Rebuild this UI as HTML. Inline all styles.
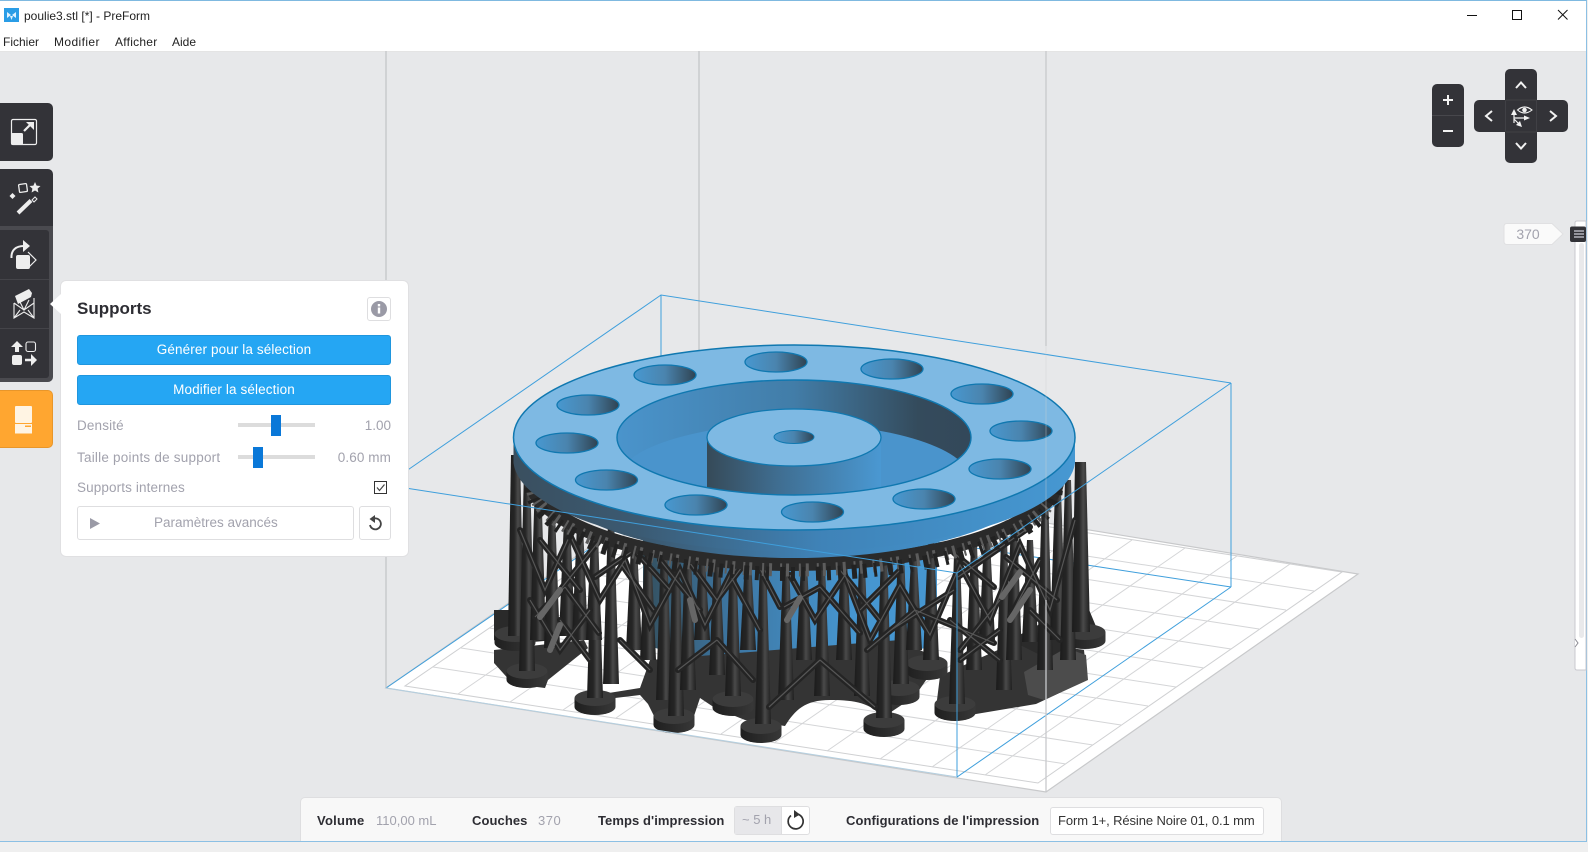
<!DOCTYPE html>
<html lang="fr"><head><meta charset="utf-8"><title>poulie3.stl [*] - PreForm</title>
<style>
html,body{margin:0;padding:0}
body{width:1588px;height:852px;overflow:hidden;position:relative;background:#efefef;font-family:"Liberation Sans",sans-serif}
.a{position:absolute;white-space:nowrap}
.dk{background:#333338}
.lb{color:#a2a2ad;font-size:13.5px;line-height:18px}
.btn{position:absolute;left:77px;width:314px;height:30px;box-sizing:border-box;background:#25a6f3;border:1px solid #1f96de;border-radius:3px;color:#fff;font-size:13.5px;line-height:27px;text-align:center;letter-spacing:.12px}
.tr{position:absolute;left:238px;width:77px;height:4px;background:#dcdcdc}
.th{position:absolute;width:10px;height:21px;background:#0a78d8}
.b{font-weight:bold;color:#2d2d33;font-size:13px;line-height:18px;top:812px;letter-spacing:.08px}
.g{color:#a2a2ad;font-size:13px;line-height:18px;top:812px}
svg{position:absolute;left:0;top:0}
.p{fill:url(#pil)}
</style></head><body>
<div class="a" style="left:0;top:0;width:1587px;height:842px;box-sizing:border-box;background:#e7e8ea;border-top:1px solid #7fb9e0;border-right:1px solid #8cc0e4;border-bottom:1px solid #8cc0e4"></div>
<div class="a" style="left:0;top:1px;width:1586px;height:50px;background:#fff;border-bottom:1px solid #e4e4e4"></div>

<svg width="1588" height="852" viewBox="0 0 1588 852">
<defs>
<linearGradient id="pil"><stop offset="0" stop-color="#1c1c1c"/><stop offset=".4" stop-color="#262626"/><stop offset=".62" stop-color="#4a4a4a"/><stop offset="1" stop-color="#1f1f1f"/></linearGradient>
<linearGradient id="ft"><stop offset="0" stop-color="#1f1f1f"/><stop offset=".5" stop-color="#2b2b2b"/><stop offset="1" stop-color="#383838"/></linearGradient>
<linearGradient id="rim"><stop offset="0" stop-color="#3a4f5f"/><stop offset=".22" stop-color="#3b5a72"/><stop offset=".55" stop-color="#3f83b8"/><stop offset="1" stop-color="#4698d2"/></linearGradient>
<linearGradient id="wall"><stop offset="0" stop-color="#4a94cc"/><stop offset=".5" stop-color="#427da8"/><stop offset=".85" stop-color="#344b5c"/><stop offset="1" stop-color="#33485a"/></linearGradient>
<linearGradient id="hub"><stop offset="0" stop-color="#364a58"/><stop offset=".4" stop-color="#3f6d90"/><stop offset="1" stop-color="#4a98d2"/></linearGradient>
<linearGradient id="hole"><stop offset="0" stop-color="#4898d0"/><stop offset=".5" stop-color="#4a84ae"/><stop offset="1" stop-color="#2f4352"/></linearGradient>
<linearGradient id="cyl"><stop offset="0" stop-color="#34505f"/><stop offset=".3" stop-color="#3d76a2"/><stop offset=".7" stop-color="#4696d0"/><stop offset="1" stop-color="#4696d0"/></linearGradient>
<clipPath id="rc"><ellipse cx="794" cy="437.5" rx="177" ry="57.5"/></clipPath>
<g id="foot"><path d="M-20.500 0V9A20.500 8 0 0 0 20.500 9V0Z" fill="url(#ft)"/><ellipse rx="20.500" ry="8" fill="#3c3c3c"/></g>
<path id="br" d="M634 550L595 577M634 550L670 590M622 565L654 610M565 587L535 617M565 587L599 633M717 640L678 670M717 640L753 680M820 660L769 707M820 660L875 707M915 610L867 650M915 610L994 643M954 590L891 630M1030 527L958 577M954 553L994 587M757 563L780 607M820 587L784 607M820 587L860 633M745 563L717 600M690 563L717 600M1006 557L1057 600M1040 560L1010 617M540 540L580 590M600 540L560 590M660 560L700 610M840 570L880 620M900 570L860 610M560 620L590 660M950 620L1000 660M1000 600L960 650M520 530L545 590L570 535L600 600L625 560L650 625L680 570L705 625L730 575L760 630M790 575L815 620L845 575L870 640L900 585L930 635L960 565L990 620L1020 545L1050 610L1075 520M530 600L560 650L590 610M1030 610L1060 640M620 640L650 670M960 660L1000 630"/>
</defs>

<!-- back grid walls -->
<path d="M386 51V688M699 51V470" stroke="#c4c5c8" stroke-width="1.3" fill="none"/>
<!-- platform -->
<path d="M386 688L1046 792L1358 574L705 467Z" fill="#fff" stroke="#c8c9cb" stroke-width="1.2"/>
<path d="M405 686L1038 783L1342 572L712 475Z" fill="none" stroke="#cfd0d2"/>
<path stroke="#d4d5d7" fill="none" d="M458 694L765 483M510 702L817 491M563 710L870 499M616 718L922 507M669 726L975 515M721 734L1027 523M774 743L1080 532M827 751L1132 540M880 759L1185 548M932 767L1237 556M985 775L1290 564M433 667L1066 764M461 648L1093 745M489 628L1121 725M517 609L1148 706M545 590L1176 687M572 571L1204 668M600 552L1231 649M628 532L1259 629M656 513L1286 610M684 494L1314 591"/>
<!-- bounding box back -->
<path d="M386 485L661 295L1231 383M661 295V370M386 688L661 500L1231 587M1231 383V587" stroke="#3f9fdc" stroke-width="1" fill="none"/>
<!-- centre blue cylinder -->
<path d="M643 530V640A147 20 0 0 0 937 640V530Z" fill="url(#cyl)"/>
<!-- rafts -->
<g fill="#343434">
<path d="M494 650L584 640L588 648L548 680L545 688L513 684L494 663Z"/>
<path d="M494 610H555V640L500 645L494 640Z" fill="#2a2a2a"/>
<path d="M590 696L640 688L650 660L900 640L940 660L915 696L882 718C872 703 855 700 830 700C805 700 795 710 785 726L745 720L715 708L700 698L694 716L654 716L648 704L640 695L615 698L600 708Z"/>
<path d="M940 676L1020 640L1084 650L1087 680L1036 704L976 714L950 718L936 708Z"/>
<path d="M1010 640L1085 600L1100 636L1050 660Z" fill="#2b2b2b"/>
<path d="M1024 672L1066 648L1086 655L1088 680L1044 700L1028 695Z" fill="#4c4c4c"/>
</g>
<use href="#foot" x="515" y="634"/><use href="#foot" x="527" y="671"/><use href="#foot" x="595" y="698"/><use href="#foot" x="674" y="716"/><use href="#foot" x="733" y="699"/><use href="#foot" x="761" y="726"/><use href="#foot" x="884" y="720"/><use href="#foot" x="899" y="688"/><use href="#foot" x="927" y="663"/><use href="#foot" x="955" y="704"/><use href="#foot" x="1085" y="632"/>
<!-- pillars -->
<g>
<path class="p" d="M508 636L511 455h9L524 636z"/>
<path class="p" d="M519 671L524 470h6L535 671z"/>
<path class="p" d="M530 640L535 480h6L546 640z"/>
<path class="p" d="M544 648L549 510h6L560 648z"/>
<path class="p" d="M559 636L564 520h6L575 636z"/>
<path class="p" d="M572 640L577 525h6L588 640z"/>
<path class="p" d="M587 698L592 530h6L603 698z"/>
<path class="p" d="M603 684L608 520h6L619 684z"/>
<path class="p" d="M586 640L591 540h6L602 640z"/>
<path class="p" d="M626 650L631 545h6L642 650z"/>
<path class="p" d="M640 660L645 545h6L656 660z"/>
<path class="p" d="M656 700L661 545h6L672 700z"/>
<path class="p" d="M668 716L673 540h6L684 716z"/>
<path class="p" d="M680 690L685 555h6L696 690z"/>
<path class="p" d="M694 640L699 560h6L710 640z"/>
<path class="p" d="M709 675L714 560h6L725 675z"/>
<path class="p" d="M725 696L730 555h6L741 696z"/>
<path class="p" d="M740 650L745 560h6L756 650z"/>
<path class="p" d="M755 724L760 555h6L771 724z"/>
<path class="p" d="M778 700L783 560h6L794 700z"/>
<path class="p" d="M796 660L801 565h6L812 660z"/>
<path class="p" d="M814 696L819 565h6L830 696z"/>
<path class="p" d="M836 660L841 560h6L852 660z"/>
<path class="p" d="M854 696L859 565h6L870 696z"/>
<path class="p" d="M876 718L881 550h6L892 718z"/>
<path class="p" d="M893 684L898 550h6L909 684z"/>
<path class="p" d="M906 650L911 560h6L922 650z"/>
<path class="p" d="M923 660L928 540h6L939 660z"/>
<path class="p" d="M949 704L954 555h6L965 704z"/>
<path class="p" d="M966 670L971 545h6L982 670z"/>
<path class="p" d="M979 640L984 540h6L995 640z"/>
<path class="p" d="M996 690L1001 540h6L1012 690z"/>
<path class="p" d="M1006 660L1011 520h6L1022 660z"/>
<path class="p" d="M1022 642L1027 540h6L1038 642z"/>
<path class="p" d="M1037 670L1042 490h6L1053 670z"/>
<path class="p" d="M1050 640L1055 490h6L1066 640z"/>
<path class="p" d="M1060 660L1065 480h6L1076 660z"/>
<path class="p" d="M1072 632L1075 462h11L1090 632z"/>
</g>
<!-- braces -->
<use href="#br" fill="none" stroke="#242424" stroke-width="6" stroke-linecap="round"/>
<use href="#br" fill="none" stroke="#565656" stroke-width="1.200"/>
<path d="M787 620L800 598M1002 597L1020 572M695 620L690 600M540 617L560 590M1010 620L1030 590M550 650L560 625" stroke="#666" stroke-width="6" stroke-linecap="round" fill="none"/>
<!-- support tips under disk -->
<path d="M530 476A264 88 0 0 0 1058 476" fill="none" stroke="#2a2a2a" stroke-width="14"/>
<path d="M532 484A262 86 0 0 0 1056 484" fill="none" stroke="#5c5c5c" stroke-width="13" stroke-dasharray="2 5 3 8 2 4 3 10"/>
<path d="M532 488A262 86 0 0 0 1056 488" fill="none" stroke="#222" stroke-width="14" stroke-dasharray="4 7 3 11 5 6"/>
<!-- underside -->
<ellipse cx="794" cy="470" rx="252" ry="88" fill="url(#rim)"/>
<!-- disk -->
<path d="M513.500 437.500A281 92.500 0 0 0 1075 437.500V463A281 92.500 0 0 1 513.500 463Z" fill="url(#rim)"/>
<ellipse cx="794.250" cy="437.500" rx="280.750" ry="92.500" fill="#7eb9e3" stroke="#1078b0" stroke-width="1.500"/>
<!-- holes -->
<g fill="url(#hole)" stroke="#1078b0" stroke-width="1.300">
<ellipse cx="776" cy="362" rx="31" ry="10"/><ellipse cx="892" cy="369" rx="31" ry="10"/><ellipse cx="982" cy="394" rx="31" ry="10"/><ellipse cx="1021" cy="431" rx="31" ry="10"/><ellipse cx="1000" cy="469" rx="31" ry="10"/><ellipse cx="924" cy="499" rx="31" ry="10"/><ellipse cx="812.500" cy="512" rx="31" ry="10"/><ellipse cx="696" cy="505" rx="31" ry="10"/><ellipse cx="606.500" cy="480" rx="31" ry="10"/><ellipse cx="567" cy="443" rx="31" ry="10"/><ellipse cx="588" cy="405" rx="31" ry="10"/><ellipse cx="665" cy="375" rx="31" ry="10"/>
</g>
<!-- recess -->
<ellipse cx="794" cy="437.500" rx="177" ry="57.500" fill="url(#wall)"/>
<g clip-path="url(#rc)">
<ellipse cx="794" cy="481" rx="177" ry="57.500" fill="#4a94cc"/>
<path d="M707 437.500V500H881V437.500Z" fill="url(#hub)"/>
</g>
<ellipse cx="794" cy="437.500" rx="177" ry="57.500" fill="none" stroke="#1078b0" stroke-width="1.400"/>
<ellipse cx="794" cy="437.500" rx="87" ry="28.500" fill="#7eb9e3" stroke="#1078b0" stroke-width="1.300"/>
<ellipse cx="794" cy="437" rx="20" ry="6.500" fill="url(#hole)" stroke="#1078b0"/>
<!-- front bounding box -->
<path d="M386 485L957 573L1231 383M957 573V777L1231 587" stroke="#3f9fdc" stroke-width="1" fill="none"/>
<path d="M386 688L957 777" stroke="#b4cfe0" stroke-width="1" fill="none"/>
<path d="M1046 51V346M1046 600V792" stroke="#c8c9cc" stroke-width="1.300"/>
<path d="M1046 346V600" stroke="#cfd0d2" stroke-width="1.300" opacity=".3"/>
</svg>

<!-- title bar -->
<svg width="20" height="16" style="left:4px;top:8px" viewBox="0 0 20 16"><rect width="15" height="14" fill="#2a9de6"/><path d="M3 4L7 7L3 10ZM12 4L8 7L12 10ZM6 8L9 8L7.500 12Z" fill="#dff2ff"/></svg>
<div class="a" style="left:24px;top:8px;font-size:12px;line-height:16px;color:#222">poulie3.stl [*] - PreForm</div>
<div class="a" style="left:3px;top:34px;font-size:12px;line-height:16px;color:#222">Fichier</div>
<div class="a" style="left:54px;top:34px;font-size:12px;line-height:16px;color:#222;letter-spacing:.4px">Modifier</div>
<div class="a" style="left:115px;top:34px;font-size:12px;line-height:16px;color:#222;letter-spacing:.25px">Afficher</div>
<div class="a" style="left:172px;top:34px;font-size:12px;line-height:16px;color:#222">Aide</div>
<svg width="130" height="30" style="left:1458px;top:1px" viewBox="1458 1 130 30"><path d="M1467 15.500H1477" stroke="#111" stroke-width="1"/><rect x="1512.500" y="10.500" width="9" height="9" fill="none" stroke="#111" stroke-width="1"/><path d="M1558 10L1567.500 19.500M1567.500 10L1558 19.500" stroke="#111" stroke-width="1"/></svg>

<!-- left toolbar -->
<div class="a dk" style="left:0;top:103px;width:53px;height:58px;border-radius:0 5px 5px 0"></div>
<div class="a dk" style="left:0;top:169px;width:53px;height:62px;border-radius:0 5px 0 0"></div>
<div class="a" style="left:0;top:226px;width:53px;height:156px;background:#4a4a4f;border-radius:0 0 5px 0"></div>
<div class="a dk" style="left:0;top:230px;width:49px;height:148px;border-radius:0 3px 3px 0"></div>
<div class="a" style="left:0;top:279px;width:49px;height:1px;background:#444449"></div>
<div class="a" style="left:0;top:328px;width:49px;height:1px;background:#444449"></div>
<div class="a" style="left:0;top:390px;width:53px;height:58px;box-sizing:border-box;background:#ffa630;border:1px solid #e8962a;border-left:0;border-radius:0 5px 5px 0"></div>
<svg width="53" height="450" viewBox="0 0 53 450" fill="none">
<!-- resize -->
<rect x="11.500" y="119.500" width="25" height="25" rx="1.500" stroke="#eee" stroke-width="1.200"/><rect x="11" y="133" width="12" height="12" rx="1.500" fill="#eee"/><path d="M24 131L32 123" stroke="#eee" stroke-width="2.200"/><path d="M26 122H34V130Z" fill="#eee"/>
<!-- wand -->
<rect x="19" y="184" width="8" height="8" rx="1" transform="rotate(-8 23 188)" stroke="#eee" stroke-width="1.300"/><path d="M35 182L36.600 185.600L40.500 186L37.600 188.600L38.400 192.500L35 190.500L31.600 192.500L32.400 188.600L29.500 186L33.400 185.600Z" fill="#eee"/><path d="M12.500 193L15.500 196L12.500 199L9.500 196Z" fill="#eee"/><path d="M18 213L31 200.500" stroke="#eee" stroke-width="4"/><path d="M32 200L35 197L37 199L34 202Z" stroke="#eee"/>
<!-- rotate -->
<path d="M11.500 258C11 250 16 246 24 246" stroke="#eee" stroke-width="2"/><path d="M23 240L30 246L23 252Z" fill="#eee"/><path d="M28 252L36 260L28 268" stroke="#eee" stroke-width="1.200"/><rect x="16" y="255" width="14" height="14" rx="2" fill="#eee"/>
<!-- supports -->
<path d="M15 296L29 289L32 293L31 297L18 304Z" fill="#eee"/><path d="M14 303V318L24 312L34 318V298M14 303L24 310L34 303M20 302L24 310L29 300M14 318L20 310M34 318L28 310" stroke="#eee" stroke-width="1.100"/>
<!-- arrows -->
<path d="M11 347L17 341L23 347H19V352H15V347Z" fill="#eee"/><rect x="26" y="342" width="9.500" height="9.500" rx="2" stroke="#eee" stroke-width="1.100"/><rect x="12" y="355" width="10" height="10" rx="2" fill="#eee"/><path d="M25 360H32" stroke="#eee" stroke-width="2.500"/><path d="M31 354L37 360L31 366Z" fill="#eee"/>
<!-- form icon -->
<rect x="15" y="406" width="17" height="17" rx="1" fill="#fff4e3"/><rect x="15" y="424" width="17" height="9.500" fill="#fff4e3"/><rect x="25" y="425.500" width="6" height="1.500" fill="#ffa630"/>
</svg>

<!-- supports panel -->
<div class="a" style="left:60px;top:280px;width:349px;height:277px;box-sizing:border-box;background:#fff;border:1px solid #e0e0e2;border-radius:6px"></div>
<svg width="14" height="20" style="left:50px;top:294px" viewBox="0 0 14 20"><path d="M11 0L0 10L11 20Z" fill="#fff"/></svg>
<div class="a" style="left:77px;top:299px;font-size:17px;line-height:20px;font-weight:bold;color:#2d2d33">Supports</div>
<div class="a" style="left:367px;top:297px;width:24px;height:24px;box-sizing:border-box;border:1px solid #dedee0;border-radius:3px"></div>
<svg width="24" height="24" style="left:367px;top:297px" viewBox="0 0 24 24"><circle cx="12" cy="12" r="8" fill="#9a9aa6"/><rect x="10.800" y="10.500" width="2.400" height="6" fill="#fff"/><rect x="10.800" y="7" width="2.400" height="2.400" fill="#fff"/></svg>
<div class="btn" style="top:335px">Générer pour la sélection</div>
<div class="btn" style="top:375px">Modifier la sélection</div>
<div class="a lb" style="left:77px;top:417px;letter-spacing:.15px">Densité</div>
<div class="tr" style="top:423px"></div><div class="th" style="left:271px;top:415px"></div>
<div class="a lb" style="right:1197px;top:417px">1.00</div>
<div class="a lb" style="left:77px;top:449px;letter-spacing:.22px">Taille points de support</div>
<div class="tr" style="top:455px"></div><div class="th" style="left:253px;top:447px"></div>
<div class="a lb" style="right:1197px;top:449px;letter-spacing:.1px">0.60 mm</div>
<div class="a lb" style="left:77px;top:479px;letter-spacing:.12px">Supports internes</div>
<div class="a" style="left:374px;top:481px;width:13px;height:13px;box-sizing:border-box;border:1px solid #333"></div>
<svg width="13" height="13" style="left:374px;top:481px" viewBox="0 0 13 13"><path d="M3 6.500L5.500 9.500L10.500 3.500" stroke="#444" stroke-width="1.200" fill="none"/></svg>
<div class="a" style="left:77px;top:506px;width:277px;height:34px;box-sizing:border-box;border:1px solid #dedee0;border-radius:3px"></div>
<svg width="12" height="13" style="left:90px;top:517px" viewBox="0 0 12 13"><path d="M0 1L10 6.500L0 12Z" fill="#9a9aa6"/></svg>
<div class="a lb" style="left:154px;top:514px">Paramètres avancés</div>
<div class="a" style="left:359px;top:506px;width:32px;height:34px;box-sizing:border-box;border:1px solid #dedee0;border-radius:3px"></div>
<svg width="32" height="34" style="left:359px;top:506px" viewBox="0 0 32 34"><path d="M13 13.500A5.500 5.500 0 1 1 11 19" stroke="#444" stroke-width="1.800" fill="none"/><path d="M16 9V17L10.500 13Z" fill="#444"/></svg>

<!-- nav pads -->
<div class="a dk" style="left:1432px;top:84px;width:32px;height:63px;border-radius:5px"></div>
<div class="a" style="left:1432px;top:115px;width:32px;height:1px;background:#47474c"></div>
<div class="a dk" style="left:1505px;top:69px;width:32px;height:94px;border-radius:5px"></div>
<div class="a dk" style="left:1474px;top:100px;width:94px;height:32px;border-radius:5px"></div>
<svg width="160" height="110" style="left:1425px;top:60px" viewBox="1425 60 160 110" fill="none" stroke="#f2f2f2">
<path d="M1448 95V105M1443 100H1453M1443 131H1453" stroke-width="2"/>
<path d="M1516 88L1521 82.500L1526 88M1516 143L1521 148.500L1526 143M1492 111L1486 116L1492 121M1550 111L1556 116L1550 121" stroke-width="2"/>
<path d="M1517.500 110Q1524.500 104 1532 110Q1524.500 116 1517.500 110Z" stroke-width="1.100"/><circle cx="1524.500" cy="110" r="1.800" fill="#f2f2f2"/>
<path d="M1514 123V112M1514 118L1525 118M1514 119L1521 126" stroke-width="1.200"/><path d="M1511 115L1514 109L1517 115ZM1524 115.500L1530 118L1524 120.500ZM1516 125L1522 127L1520 121Z" fill="#f2f2f2" stroke="none"/>
<path d="M1505.500 100.500V131.500M1536.500 100.500V131.500M1506 100H1537M1506 132H1537" stroke="#404045" stroke-width="1"/>
</svg>

<!-- layer slider -->
<svg width="90" height="470" style="left:1498px;top:215px" viewBox="1498 215 90 470">
<path d="M1577 221H1586V670H1577Q1575 670 1575 668V223Q1575 221 1577 221Z" fill="#fff" stroke="#c9c9cf"/>
<rect x="1579" y="243" width="5" height="395" rx="2.500" fill="#e9e9eb"/>
<path d="M1575 639L1578 643L1575 647" fill="#fff" stroke="#8a8a92"/>
<path d="M1507 223.500H1552L1563 234L1552 244.500H1507Q1504 244.500 1504 241.500V226.500Q1504 223.500 1507 223.500Z" fill="#fafafa" stroke="#e0e0e2"/>
<rect x="1570" y="226.500" width="16" height="15.500" rx="2" fill="#333338"/>
<path d="M1574 231H1584M1574 234H1584M1574 237H1584" stroke="#b5b5bd" stroke-width="1.500"/>
</svg>
<div class="a" style="left:1504px;top:225px;width:48px;text-align:center;font-size:14px;line-height:18px;color:#a2a2ad">370</div>

<!-- bottom bar -->
<div class="a" style="left:300px;top:797px;width:982px;height:44px;box-sizing:border-box;background:#f8f8f8;border:1px solid #dedee0;border-bottom:0;border-radius:5px 5px 0 0"></div>
<div class="a b" style="left:317px;letter-spacing:.25px">Volume</div>
<div class="a g" style="left:376px">110,00 mL</div>
<div class="a b" style="left:472px">Couches</div>
<div class="a g" style="left:538px;letter-spacing:.5px">370</div>
<div class="a b" style="left:598px">Temps d'impression</div>
<div class="a" style="left:734px;top:806px;width:76px;height:29px;box-sizing:border-box;background:#fff;border:1px solid #dedee0;border-radius:3px"></div>
<div class="a" style="left:735px;top:807px;width:46px;height:27px;background:#e7e7ea;border-right:1px solid #dedee0"></div>
<div class="a g" style="left:742px;top:811px">~ 5 h</div>
<svg width="24" height="24" style="left:783px;top:808px" viewBox="0 0 24 24"><path d="M8 7.500A7.500 7.500 0 1 0 14 6" stroke="#333" stroke-width="1.700" fill="none"/><path d="M11 2L17 6.500L11 10Z" fill="#333"/></svg>
<div class="a b" style="left:846px">Configurations de l'impression</div>
<div class="a" style="left:1050px;top:807px;width:214px;height:28px;box-sizing:border-box;background:#fff;border:1px solid #dedee0;border-radius:3px"></div>
<div class="a" style="left:1058px;top:812px;font-size:13px;line-height:17px;color:#333;letter-spacing:-.1px">Form 1+, Résine Noire 01, 0.1 mm</div>
</body></html>
